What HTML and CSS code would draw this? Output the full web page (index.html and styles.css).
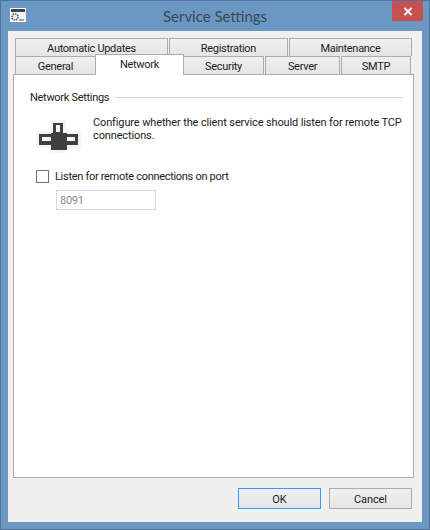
FILE: index.html
```html
<!DOCTYPE html>
<html lang="en">
<head>
<meta charset="utf-8">
<title>Service Settings</title>
<link rel="stylesheet" href="styles.css">
</head>
<body>
<div class="window">
  <header class="titlebar">
    <svg class="app-icon" width="16" height="14" viewBox="0 0 16 14"><rect width="16" height="14" fill="#fff"/><rect x="1" y="1" width="14" height="12" fill="#f4f6f8"/><rect x="1" y="1" width="14" height="3" fill="#3b4650"/><circle cx="5" cy="9" r="3" fill="none" stroke="#555" stroke-width="1.6" stroke-dasharray="1.5 0.8"/><path d="M9 12h5" stroke="#555"/></svg>
    <h1 class="title">Service Settings</h1>
    <button class="close"><svg width="10" height="9" viewBox="0 0 10 9"><path d="M1.5 1L8.5 8M8.5 1L1.5 8" stroke="#fff" stroke-width="2"/></svg></button>
  </header>
  <main class="client">
    <div class="tabs">
      <div class="tab-row row-top">
        <div class="tab w-auto">Automatic Updates</div>
        <div class="tab w-reg">Registration</div>
        <div class="tab w-main">Maintenance</div>
      </div>
      <div class="tab-row row-bottom">
        <div class="tab w-gen">General</div>
        <div class="tab selected">Network</div>
        <div class="tab w-sec">Security</div>
        <div class="tab w-srv">Server</div>
        <div class="tab w-smtp">SMTP</div>
      </div>
    </div>
    <section class="panel">
      <div class="group-head"><span>Network Settings</span><i class="rule"></i></div>
      <div class="intro">
        <svg class="net-icon" width="45" height="33" viewBox="0 0 45 33"><rect x="14" y="0" width="16" height="33" fill="#f5f5f5"/><rect x="0" y="11" width="45" height="17" fill="#f5f5f5"/><rect x="17" y="3" width="10" height="11" fill="#404040"/><rect x="20" y="5" width="4" height="7" fill="#f5f5f5"/><rect x="3" y="14" width="39" height="11" fill="#404040"/><rect x="6" y="17" width="9" height="4" fill="#f5f5f5"/><rect x="30" y="17" width="9" height="4" fill="#f5f5f5"/><rect x="15" y="13" width="16" height="17" fill="#404040"/></svg>
        <p>Configure whether the client service should listen for remote TCP connections.</p>
      </div>
      <label class="check"><span class="box"></span>Listen for remote connections on port</label>
      <div class="port">8091</div>
    </section>
    <footer class="actions">
      <button class="btn default">OK</button>
      <button class="btn">Cancel</button>
    </footer>
  </main>
</div>
</body>
</html>
```
FILE: styles.css
```css
* { box-sizing: border-box; }
html, body { margin: 0; padding: 0; }
body { width: 430px; height: 530px; overflow: hidden; font: 11px/15px Roboto, sans-serif; letter-spacing: -0.3px; color: #1c1c1c; }
.window { width: 430px; height: 530px; background: #6b98c3; border: 1px solid #4f7399; padding: 0 7px 7px; display: flex; flex-direction: column; }
.titlebar { height: 30px; display: flex; align-items: flex-start; position: relative; flex: none; }
.app-icon { margin: 7px 0 0 2px; }
.title { position: absolute; left: 0; right: 0; top: 5px; margin: 0; text-align: center; font: 400 15px/20px Lato, sans-serif; letter-spacing: 0; color: #3a4856; }
.close { position: absolute; right: -1px; top: 0; width: 31px; height: 20px; background: #c75050; border: 0; padding: 0; display: flex; align-items: center; justify-content: center; }
.client { flex: 1; background: #f0f0f0; display: flex; flex-direction: column; padding: 7px 7px 0 5px; min-height: 0; }
.tabs { flex: none; padding-left: 2px; }
.tab-row { display: flex; height: 18px; }
.row-top { gap: 1px; }
.tab { height: 18px; background: linear-gradient(#f0f0f0, #e5e5e5); border: 1px solid #acacac; border-bottom: 0; text-align: center; line-height: 19px; }
.w-auto { width: 153px; }
.w-reg { width: 119px; }
.w-main { width: 123px; }
.w-gen { width: 81px; }
.selected { width: 89px; height: 21px; margin: -2px -1px 0 -1px; background: #fff; position: relative; z-index: 2; line-height: 19px; }
.w-sec { width: 81px; margin-left: 0; }
.w-srv { width: 75px; margin-left: 1px; }
.w-smtp { width: 70px; margin-left: 1px; }
.panel { flex: none; height: 404px; width: 401px; background: #fff; border: 1px solid #acacac; padding: 15px 10px 0 16px; }
.group-head { display: flex; align-items: center; gap: 6px; height: 15px; }
.rule { flex: 1; height: 1px; background: #d5d5d5; }
.intro { display: flex; margin-top: 15px; height: 33px; }
.net-icon { margin: 0 0 0 6px; flex: none; }
.intro p { margin: -4px 0 0 12px; width: 315px; line-height: 13px; letter-spacing: -0.13px; }
.check { display: flex; align-items: center; margin-top: 16px; margin-left: 6px; height: 15px; }
.box { width: 13px; height: 13px; border: 1px solid #707070; background: #fff; margin-right: 6px; }
.port { width: 100px; height: 20px; margin: 6px 0 0 26px; border: 1px solid #d9d9d9; color: #8a8a8a; padding: 2px 3px; line-height: 15px; }
.actions { flex: 1; display: flex; justify-content: flex-end; gap: 8px; padding: 10px 3px 0 0; }
.btn { width: 83px; height: 21px; background: linear-gradient(#f0f0f0, #e5e5e5); border: 1px solid #acacac; font: inherit; letter-spacing: -0.1px; color: #1c1c1c; padding: 1px 0 0; }
.default { border-color: #3399ff; }
```
